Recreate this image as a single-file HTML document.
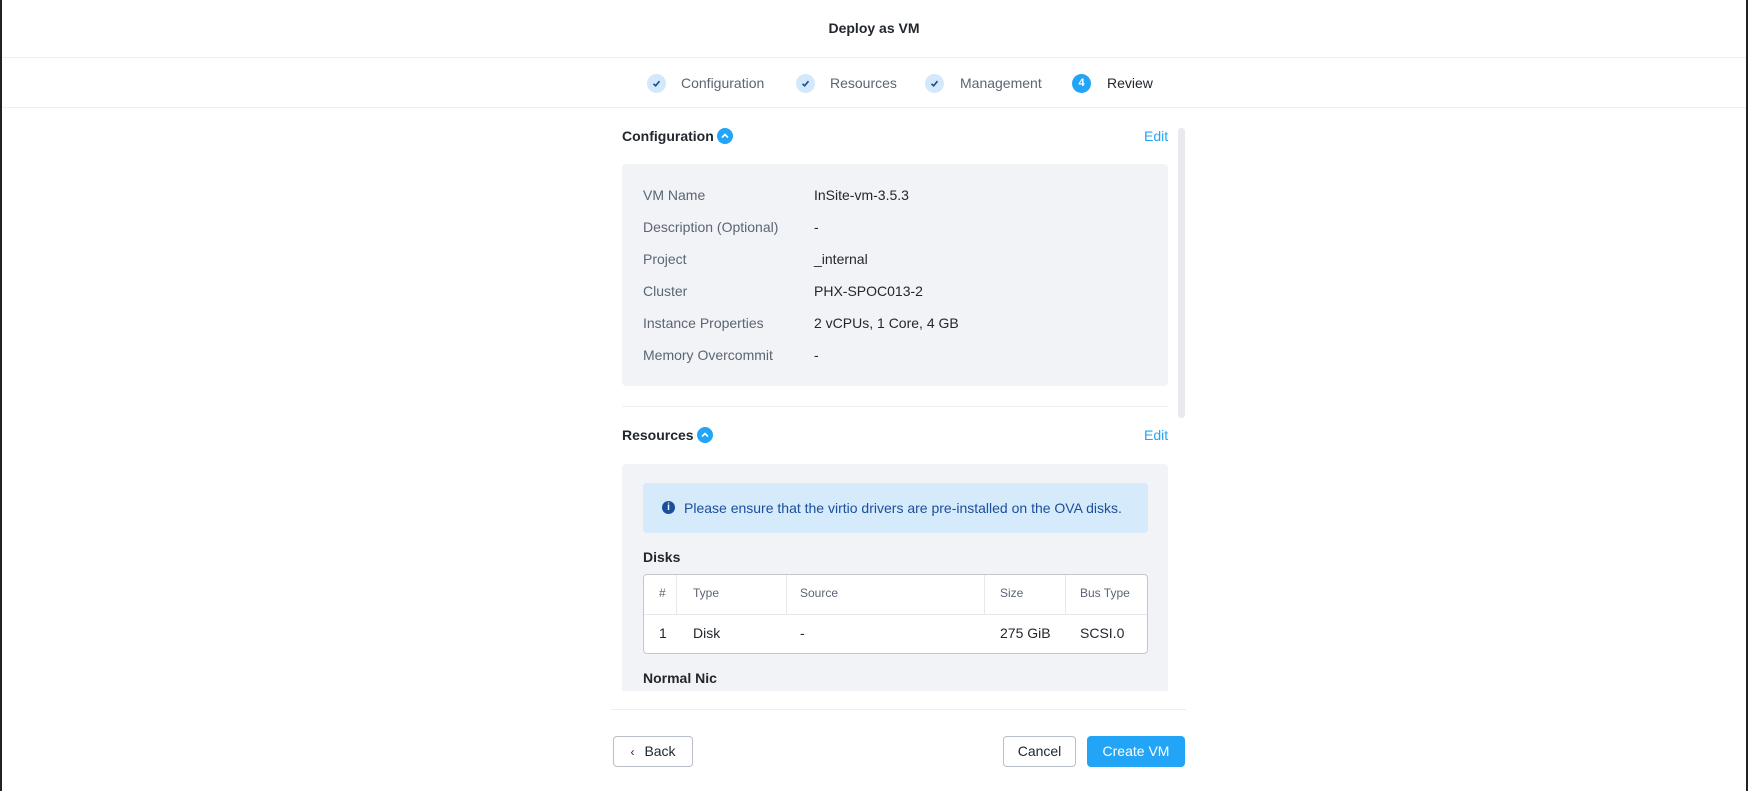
<!DOCTYPE html>
<html><head><meta charset="utf-8"><style>
*{margin:0;padding:0;box-sizing:border-box}
body{width:1748px;height:791px;background:#fff;font-family:"Liberation Sans",sans-serif;position:relative;overflow:hidden;color:#22272e}
.a{position:absolute;white-space:nowrap}
.lbl{color:#5b6573;font-size:14px}
.val{color:#22272e;font-size:14px}
.circ{position:absolute;width:19px;height:19px;border-radius:50%;background:#d4e8fb;top:74px}
.circ svg{position:absolute;left:5px;top:5px}
.st{position:absolute;top:75px;font-size:14px;color:#5b6573}
.hline{position:absolute;height:1px;background:#eceef1}
.chev{position:absolute;width:16px;height:16px;border-radius:50%;background:#22a5f7}
.th{position:absolute;top:586px;font-size:12px;color:#5b6573}
.td{position:absolute;top:625px;font-size:14px}
.vl{position:absolute;top:575px;height:40px;width:1px;background:#e6e8eb}
.btn{position:absolute;top:736px;height:31px;border:1px solid #b9bfc7;border-radius:4px;background:#fff;font-size:14px;text-align:center;line-height:29px}
</style></head><body>
<div class="a" style="left:0;top:0;width:2px;height:791px;background:#222"></div>
<div class="a" style="left:1746px;top:0;width:2px;height:791px;background:#222"></div>
<div class="a" style="left:0;width:1748px;top:20px;text-align:center;font-size:14px;font-weight:bold;color:#22272e">Deploy as VM</div>
<div class="hline" style="left:2px;width:1744px;top:57px"></div>
<div class="hline" style="left:2px;width:1744px;top:107px"></div>

<div class="circ" style="left:647px"><svg width="9" height="9" viewBox="0 0 9 9"><path d="M1.5 4.8L3.6 6.8L7.5 2.2" stroke="#1a4f8c" stroke-width="1.6" fill="none"/></svg></div>
<div class="st" style="left:681px">Configuration</div>
<div class="circ" style="left:796px"><svg width="9" height="9" viewBox="0 0 9 9"><path d="M1.5 4.8L3.6 6.8L7.5 2.2" stroke="#1a4f8c" stroke-width="1.6" fill="none"/></svg></div>
<div class="st" style="left:830px">Resources</div>
<div class="circ" style="left:925px"><svg width="9" height="9" viewBox="0 0 9 9"><path d="M1.5 4.8L3.6 6.8L7.5 2.2" stroke="#1a4f8c" stroke-width="1.6" fill="none"/></svg></div>
<div class="st" style="left:960px">Management</div>
<div class="circ" style="left:1072px;background:#22a5f7;color:#fff;font-size:11px;font-weight:bold;text-align:center;line-height:19px">4</div>
<div class="st" style="left:1107px;color:#22272e">Review</div>

<div class="a" style="left:1178px;top:128px;width:7px;height:290px;background:#e8eaed;border-radius:3px"></div>

<div class="a" style="left:622px;top:128px;font-size:14px;font-weight:bold">Configuration</div>
<div class="chev" style="left:717px;top:128px"><svg width="16" height="16"><path d="M5 9.5L8 6.5L11 9.5" stroke="#fff" stroke-width="1.6" fill="none"/></svg></div>
<div class="a" style="left:1144px;top:128px;font-size:14px;color:#22a5f7">Edit</div>
<div class="a" style="left:622px;top:164px;width:546px;height:222px;background:#f2f3f6;border-radius:4px"></div>
<div class="a lbl" style="left:643px;top:187px">VM Name</div><div class="a val" style="left:814px;top:187px">InSite-vm-3.5.3</div>
<div class="a lbl" style="left:643px;top:219px">Description (Optional)</div><div class="a val" style="left:814px;top:219px">-</div>
<div class="a lbl" style="left:643px;top:251px">Project</div><div class="a val" style="left:814px;top:251px">_internal</div>
<div class="a lbl" style="left:643px;top:283px">Cluster</div><div class="a val" style="left:814px;top:283px">PHX-SPOC013-2</div>
<div class="a lbl" style="left:643px;top:315px">Instance Properties</div><div class="a val" style="left:814px;top:315px">2 vCPUs, 1 Core, 4 GB</div>
<div class="a lbl" style="left:643px;top:347px">Memory Overcommit</div><div class="a val" style="left:814px;top:347px">-</div>
<div class="hline" style="left:622px;width:546px;top:406px"></div>

<div class="a" style="left:622px;top:427px;font-size:14px;font-weight:bold">Resources</div>
<div class="chev" style="left:697px;top:427px"><svg width="16" height="16"><path d="M5 9.5L8 6.5L11 9.5" stroke="#fff" stroke-width="1.6" fill="none"/></svg></div>
<div class="a" style="left:1144px;top:427px;font-size:14px;color:#22a5f7">Edit</div>
<div class="a" style="left:622px;top:464px;width:546px;height:227px;background:#f2f3f6;border-radius:4px 4px 0 0"></div>
<div class="a" style="left:643px;top:483px;width:505px;height:50px;background:#d5eafb;border-radius:4px"></div>
<div class="a" style="left:662px;top:501px;width:13px;height:13px;border-radius:50%;background:#1a4f9c;color:#fff;font-size:10px;font-weight:bold;text-align:center;line-height:13px">i</div>
<div class="a" style="left:684px;top:500px;font-size:14px;color:#1a4f9c">Please ensure that the virtio drivers are pre-installed on the OVA disks.</div>
<div class="a" style="left:643px;top:549px;font-size:14px;font-weight:bold">Disks</div>
<div class="a" style="left:643px;top:574px;width:505px;height:80px;background:#fff;border:1px solid #c3c8cf;border-radius:4px"></div>
<div class="hline" style="left:644px;width:503px;top:614px;background:#e6e8eb"></div>
<div class="vl" style="left:676px"></div><div class="vl" style="left:786px"></div><div class="vl" style="left:984px"></div><div class="vl" style="left:1065px"></div>
<div class="th" style="left:659px">#</div><div class="th" style="left:693px">Type</div><div class="th" style="left:800px">Source</div><div class="th" style="left:1000px">Size</div><div class="th" style="left:1080px">Bus Type</div>
<div class="td" style="left:659px">1</div><div class="td" style="left:693px">Disk</div><div class="td" style="left:800px">-</div><div class="td" style="left:1000px">275 GiB</div><div class="td" style="left:1080px">SCSI.0</div>
<div class="a" style="left:643px;top:670px;font-size:14px;font-weight:bold">Normal Nic</div>
<div class="hline" style="left:611px;width:575px;top:709px"></div>

<div class="btn" style="left:613px;width:80px"><span style="font-size:12px;margin-right:10px">‹</span>Back</div>
<div class="btn" style="left:1003px;width:73px">Cancel</div>
<div class="btn" style="left:1087px;width:98px;background:#22a5f7;border-color:#22a5f7;color:#fff">Create VM</div>
</body></html>
